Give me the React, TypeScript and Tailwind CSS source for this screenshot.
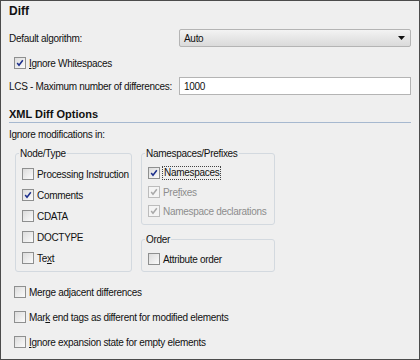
import React from "react";

type CheckProps = {
  checked?: boolean;
  disabled?: boolean;
  focused?: boolean;
  children: React.ReactNode;
};

const Check = ({ checked, disabled, focused, children }: CheckProps) => (
  <div className="flex items-center h-[14px] whitespace-nowrap">
    <div
      className={
        disabled
          ? "w-[12px] h-[12px] shrink-0 border border-[#bcbcbc] bg-[#f4f4f4] flex items-center justify-center"
          : "w-[12px] h-[12px] shrink-0 border border-[#8e8f8f] bg-gradient-to-br from-[#dcdcdc] to-[#fbfbfb] flex items-center justify-center"
      }
    >
      {checked && (
        <svg width="8" height="8" viewBox="0 0 8 8">
          <path
            d="M1.2 4 L3 6.3 L6.8 1.2"
            fill="none"
            stroke={disabled ? "#a9a9a9" : "#1c2f8c"}
            strokeWidth="1.5"
          />
        </svg>
      )}
    </div>
    <span
      className={
        (disabled ? "text-[#8d8d8d] " : "text-[#111] ") +
        (focused ? "ml-[2px] px-[1px] leading-[12px] border border-dotted border-[#444]" : "ml-[3px]")
      }
    >
      {children}
    </span>
  </div>
);

const Group = ({ title, className, children }: { title: string; className: string; children: React.ReactNode }) => (
  <fieldset className={"border border-[#d3d9df] rounded-[3px] " + className}>
    <legend className="-ml-[3px] px-[1px] leading-[13px] text-[#111]">{title}</legend>
    {children}
  </fieldset>
);

export default function App() {
  return (
    <div
      className="w-[420px] h-[360px] border border-[#4b4b4b] bg-[#efefef] px-[8px] text-[10px] tracking-[-0.3px] text-[#111]"
      style={{ fontFamily: '"Liberation Sans", Arial, sans-serif' }}
    >
      <div className="h-[19px] flex items-center font-bold text-[12px] tracking-normal">Diff</div>

      <div className="mt-[9px] h-[18px] flex items-center">
        <span className="w-[170px]">Default algorithm:</span>
        <div className="flex-1 h-[18px] border border-[#b4b4b4] rounded-[2px] bg-gradient-to-b from-[#f3f3f3] to-[#dadada] flex items-center pl-[4px] pr-[5px]">
          <span className="flex-1">Auto</span>
          <svg width="7" height="4" viewBox="0 0 7 4">
            <path d="M0 0 H7 L3.5 4 Z" fill="#111" />
          </svg>
        </div>
      </div>

      <div className="mt-[9px] pl-[5px]">
        <Check checked>
          <u>I</u>gnore Whitespaces
        </Check>
      </div>

      <div className="mt-[7px] h-[18px] flex items-center">
        <span className="w-[170px]">LCS - Maximum number of differences:</span>
        <div className="flex-1 h-[18px] border border-[#b4b4b4] bg-white flex items-center pl-[4px]">1000</div>
      </div>

      <div className="mt-[11px] h-[16px] flex items-center font-bold text-[11px] tracking-normal">XML Diff Options</div>
      <div className="h-px bg-[#a6b8cf]" />

      <div className="mt-[4px] h-[14px] flex items-center">Ignore modifications in:</div>

      <div className="mt-[6px] flex gap-[9px] pl-[6px]">
        <Group title="Node/Type" className="w-[117px] h-[125px] pl-[6px] flex flex-col gap-[7px] pt-[7px]">
          <Check>Processing Instruction</Check>
          <Check checked>Comments</Check>
          <Check>CDATA</Check>
          <Check>DOCTYPE</Check>
          <Check>
            Te<u>x</u>t
          </Check>
        </Group>

        <div className="flex flex-col gap-[8px]">
          <Group title="Namespaces/Prefixes" className="w-[134px] h-[78px] pl-[6px] flex flex-col gap-[5px] pt-[6px]">
            <Check checked focused>
              Namespaces
            </Check>
            <Check checked disabled>
              Pre<u>f</u>ixes
            </Check>
            <Check checked disabled>
              Namespace declarations
            </Check>
          </Group>
          <Group title="Order" className="w-[134px] h-[39px] pl-[6px] pt-[6px]">
            <Check>Attribute order</Check>
          </Group>
        </div>
      </div>

      <div className="mt-[13px] pl-[5px] flex flex-col gap-[11px]">
        <Check>
          Merge ad<u>j</u>acent differences
        </Check>
        <Check>
          Mar<u>k</u> end tags as different for modified elements
        </Check>
        <Check>
          <u>I</u>gnore expansion state for empty elements
        </Check>
      </div>
    </div>
  );
}
